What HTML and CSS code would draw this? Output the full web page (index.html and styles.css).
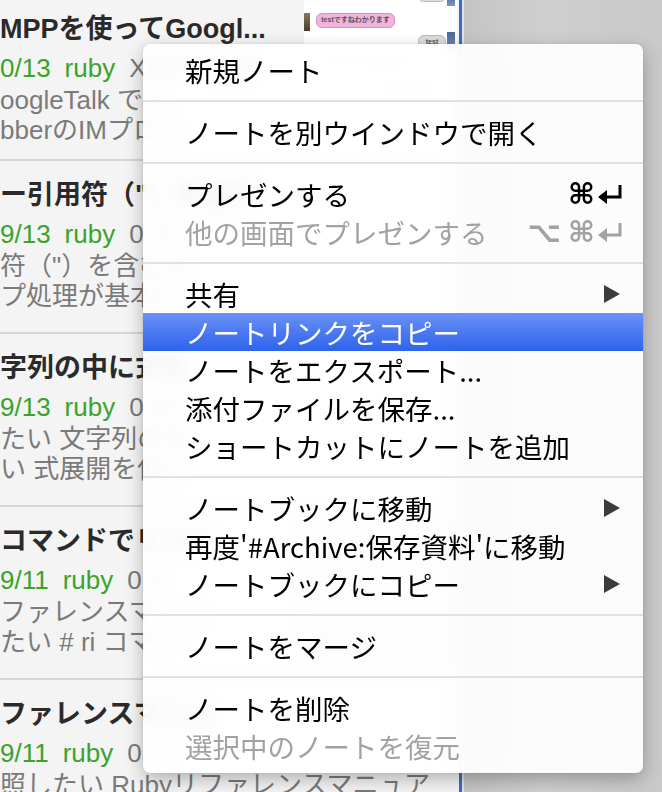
FILE: index.html
```html
<!DOCTYPE html>
<html lang="ja">
<head>
  <meta charset="UTF-8" />
  <title>ノート コンテキストメニュー</title>
  <link rel="stylesheet" href="styles.css">
</head>
<body>

  <div class="app">
    <div class="notes">
      <div class="note note-first">
        <div class="note-body">
          <div class="note-title">MPPを使ってGoogl...</div>
          <div class="note-meta"><span class="date">0/13</span><span class="tag">ruby</span><span class="lead">XMPPを使</span></div>
          <div class="note-snippet">oogleTalk でメ</div>
          <div class="note-snippet">bberのIMプロト</div>
        </div>
        <div class="thumb thumb-chat">
          <div class="bubble bubble-gray b1"></div>
          <div class="avatar avatar-blue a1"></div>
          <div class="avatar avatar-brown a2"></div>
          <div class="bubble bubble-pink b2">testですねわかります</div>
          <div class="bubble bubble-gray b3">test</div>
          <div class="avatar avatar-blue a3"></div>
          <div class="chat-line l1"></div>
          <div class="chat-line l2"></div>
        </div>
      </div>

      <div class="note">
        <div class="note-body">
          <div class="note-title">ー引用符（"）を含む</div>
          <div class="note-meta"><span class="date">9/13</span><span class="tag">ruby</span><span class="lead">0 ダ</span></div>
          <div class="note-snippet">符（"）を含む文</div>
          <div class="note-snippet">プ処理が基本だ</div>
        </div>
      </div>

      <div class="note">
        <div class="note-body">
          <div class="note-title">字列の中に式を</div>
          <div class="note-meta"><span class="date">9/13</span><span class="tag">ruby</span><span class="lead">0 式</span></div>
          <div class="note-snippet">たい 文字列の中</div>
          <div class="note-snippet">い 式展開を使う</div>
        </div>
      </div>

      <div class="note">
        <div class="note-body">
          <div class="note-title">コマンドでリファ</div>
          <div class="note-meta"><span class="date">9/11</span><span class="tag">ruby</span><span class="lead">0 ri</span></div>
          <div class="note-snippet">ファレンスマニュ</div>
          <div class="note-snippet">たい # ri コマン</div>
        </div>
        <div class="thumb thumb-plain"></div>
      </div>

      <div class="note">
        <div class="note-body">
          <div class="note-title">ファレンスマニュ</div>
          <div class="note-meta"><span class="date">9/11</span><span class="tag">ruby</span><span class="lead">0 リ</span></div>
          <div class="note-snippet">照したい Rubyリファレンスマニュア</div>
        </div>
      </div>
    </div>
    <div class="divider"></div>
    <div class="desk"></div>
  </div>

  <div class="menu">
    <div class="menu-item">新規ノート</div>
    <div class="menu-sep"></div>
    <div class="menu-item">ノートを別ウインドウで開く</div>
    <div class="menu-sep"></div>
    <div class="menu-item">プレゼンする
      <span class="shortcut"><span class="key">⌘</span><svg class="ret" viewBox="0 0 25 20"><path d="M22 1 V13 H8" /><polygon points="0,13 9,6 9,20" /></svg></span>
    </div>
    <div class="menu-item disabled">他の画面でプレゼンする
      <span class="shortcut"><span class="key opt">⌥</span><span class="key">⌘</span><svg class="ret" viewBox="0 0 25 20"><path d="M22 1 V13 H8" /><polygon points="0,13 9,6 9,20" /></svg></span>
    </div>
    <div class="menu-sep"></div>
    <div class="menu-item">共有
      <svg class="sub" viewBox="0 0 16 18"><polygon points="0,0 16,9 0,18" /></svg>
    </div>
    <div class="menu-item selected">ノートリンクをコピー</div>
    <div class="menu-item">ノートをエクスポート...</div>
    <div class="menu-item">添付ファイルを保存...</div>
    <div class="menu-item">ショートカットにノートを追加</div>
    <div class="menu-sep"></div>
    <div class="menu-item">ノートブックに移動
      <svg class="sub" viewBox="0 0 16 18"><polygon points="0,0 16,9 0,18" /></svg>
    </div>
    <div class="menu-item">再度'#Archive:保存資料'に移動</div>
    <div class="menu-item">ノートブックにコピー
      <svg class="sub" viewBox="0 0 16 18"><polygon points="0,0 16,9 0,18" /></svg>
    </div>
    <div class="menu-sep"></div>
    <div class="menu-item">ノートをマージ</div>
    <div class="menu-sep"></div>
    <div class="menu-item">ノートを削除</div>
    <div class="menu-item disabled">選択中のノートを復元</div>
  </div>

</body>
</html>
```

FILE: styles.css
```css
body {
    margin: 0;
    width: 662px;
    height: 792px;
    overflow: hidden;
    position: relative;
    font-family: "Liberation Sans", "Noto Sans CJK JP", sans-serif;
    background: #cbcbcb;
}
.app {
    display: flex;
    height: 792px;
}
.notes {
    width: 459px;
    background: #f4f4f4;
    overflow: hidden;
}
.divider {
    width: 3px;
    background: #3a6bc9;
    border-right: 2px solid #e2e2e2;
}
.desk {
    flex: 1;
    background: linear-gradient(90deg, #c4c4c4, #cfcfcf 40%, #c9c9c9);
}

/* note list */
.note {
    display: flex;
    height: 173px;
    box-sizing: border-box;
    padding: 16px 2px 0 0;
    border-bottom: 2px solid #d6d6d6;
    overflow: hidden;
}
.note-first {
    height: 166px;
    margin-top: -5px;
}
.note-body {
    flex: 1;
    min-width: 0;
    white-space: nowrap;
    overflow: hidden;
}
.note-title {
    font-size: 27px;
    font-weight: bold;
    line-height: 36px;
    color: #2a2a2a;
}
.note-meta {
    margin-top: 4px;
    font-size: 26px;
    line-height: 34px;
    color: #7a7a7a;
}
.date, .tag {
    color: #3aa32c;
    margin-right: 14px;
}
.note-snippet {
    font-size: 26px;
    line-height: 30px;
    color: #7a7a7a;
}

.thumb {
    position: relative;
    flex: none;
}
.thumb-chat {
    width: 153px;
    height: 150px;
    margin-top: -16px;
    background: #fff;
}
.thumb-plain {
    width: 149px;
    height: 146px;
    margin: -5px 5px 0 0;
    background: #e2e2e2;
}
.bubble {
    position: absolute;
    border-radius: 6px;
    font-size: 7px;
    line-height: 12px;
    text-align: center;
    color: #555;
    font-weight: bold;
}
.bubble-gray {
    background: #d9dde2;
    border: 1px solid #b9bec5;
}
.bubble-pink {
    background: #f2b3dc;
    border: 1px solid #d98fc1;
}
.b1 { left: 114px; top: -4px; width: 26px; height: 9px; }
.b2 { left: 12px; top: 18px; width: 77px; height: 13px; }
.b3 { left: 114px; top: 40px; width: 26px; height: 11px; }
.avatar {
    position: absolute;
}
.avatar-blue {
    background: linear-gradient(#4a6a9a, #7d97b8);
}
.avatar-brown {
    background: linear-gradient(#8a7560, #4c3b2c);
}
.a1 { left: 143px; top: 0; width: 8px; height: 11px; }
.a2 { left: 0; top: 18px; width: 6px; height: 18px; }
.a3 { left: 143px; top: 37px; width: 8px; height: 20px; }
.chat-line {
    position: absolute;
    height: 8px;
    background: #d8d8d8;
    border-radius: 4px;
}
.l1 { left: 20px; top: 62px; width: 90px; }
.l2 { left: 70px; top: 88px; width: 70px; }

/* context menu */
.menu {
    position: absolute;
    left: 143px;
    top: 44px;
    width: 500px;
    box-sizing: border-box;
    padding: 7px 0 8px;
    background: rgba(255, 255, 255, 0.93);
    backdrop-filter: blur(8px);
    border-radius: 7px;
    box-shadow: 0 0 1px rgba(0, 0, 0, 0.35), 0 6px 18px rgba(0, 0, 0, 0.28);
    font-family: "Noto Sans CJK JP", "Liberation Sans", sans-serif;
    font-size: 27.5px;
    color: #000;
}
.menu-item {
    display: flex;
    align-items: center;
    height: 38px;
    line-height: 38px;
    padding: 0 20px 0 42px;
    white-space: nowrap;
}
.menu-item.disabled {
    color: #a2a2a2;
}
.menu-item.selected {
    color: #fff;
    background: linear-gradient(#6d92f6, #4b79f1 50%, #2e63ec);
}
.menu-sep {
    height: 2px;
    margin: 11px 0;
    background: #e1e1e1;
}
.shortcut {
    margin-left: auto;
    display: flex;
    align-items: center;
    gap: 3px;
}
.key {
    font-family: "DejaVu Sans", sans-serif;
    font-size: 29px;
    font-weight: bold;
    line-height: 1;
}
.key.opt {
    margin-right: 4px;
}
.ret {
    width: 25px;
    height: 20px;
}
.ret path {
    fill: none;
    stroke: currentColor;
    stroke-width: 3;
}
.ret polygon {
    fill: currentColor;
}
.sub {
    margin-left: auto;
    margin-right: 3px;
    width: 16px;
    height: 18px;
    fill: #3c3c3c;
}
```
